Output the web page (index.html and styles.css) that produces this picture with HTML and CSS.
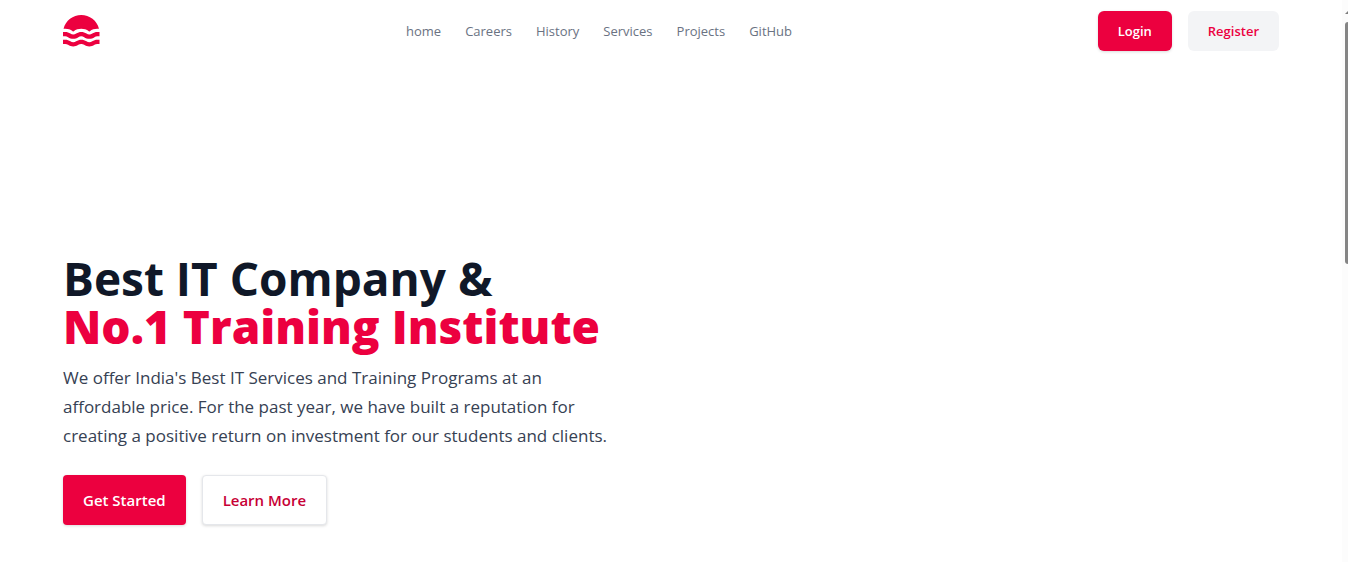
FILE: index.html
```html
<!DOCTYPE html>
<html lang="en">
<head>
<meta charset="utf-8">
<meta name="viewport" content="width=device-width, initial-scale=1">
<title>Best IT Company</title>
<link rel="stylesheet" href="styles.css">
</head>
<body>
<div class="page">
  <header class="header container">
    <a class="logo" href="#" aria-label="Home">
      <svg viewBox="0 0 28 24" fill="currentColor" aria-hidden="true">
        <path d="M0.41 10.3847C1.14777 7.4194 2.85643 4.7861 5.2639 2.90424C7.6714 1.02234 10.6393 0 13.695 0C16.7507 0 19.7186 1.02234 22.1261 2.90424C24.5336 4.7861 26.2422 7.4194 26.98 10.3847H25.78C23.7557 10.3549 21.7729 10.9599 20.11 12.1147C20.014 12.1842 19.9138 12.2477 19.81 12.3047H19.67C19.5662 12.2477 19.466 12.1842 19.37 12.1147C17.6924 10.9866 15.7166 10.3841 13.695 10.3841C11.6734 10.3841 9.6976 10.9866 8.02 12.1147C7.924 12.1842 7.8238 12.2477 7.72 12.3047H7.58C7.4762 12.2477 7.376 12.1842 7.28 12.1147C5.6171 10.9599 3.6343 10.3549 1.61 10.3847H0.41Z"/>
        <path id="wave" d="M23.62 16.6547C24.236 16.175 24.9995 15.924 25.78 15.9447H27.39V12.7347H25.78C24.4052 12.7181 23.0619 13.146 21.95 13.9547C21.3243 14.416 20.5674 14.6649 19.79 14.6649C19.0126 14.6649 18.2557 14.416 17.63 13.9547C16.4899 13.1611 15.1341 12.7356 13.745 12.7356C12.3559 12.7356 11.0001 13.1611 9.86 13.9547C9.2343 14.416 8.4774 14.6649 7.7 14.6649C6.9226 14.6649 6.1657 14.416 5.54 13.9547C4.4144 13.1356 3.0518 12.7072 1.66 12.7347H0V15.9447H1.61C2.39051 15.924 3.154 16.175 3.77 16.6547C4.908 17.4489 6.2623 17.8747 7.65 17.8747C9.0377 17.8747 10.392 17.4489 11.53 16.6547C12.1468 16.1765 12.9097 15.9257 13.69 15.9447C14.4708 15.9223 15.2348 16.1735 15.85 16.6547C16.9901 17.4484 18.3459 17.8738 19.735 17.8738C21.1241 17.8738 22.4799 17.4484 23.62 16.6547Z"/>
        <use href="#wave" y="5.74"/>
      </svg>
    </a>
    <nav class="nav" aria-label="Main">
      <a href="#">home</a>
      <a href="#">Careers</a>
      <a href="#">History</a>
      <a href="#">Services</a>
      <a href="#">Projects</a>
      <a href="#">GitHub</a>
    </nav>
    <div class="account">
      <button class="btn btn-login" type="button">Login</button>
      <button class="btn btn-register" type="button">Register</button>
    </div>
  </header>
  <main class="hero container">
    <h1 class="title">Best IT Company &amp; <strong>No.1 Training Institute</strong></h1>
    <p class="lead">We offer India's Best IT Services and Training Programs at an affordable price. For the past year, we have built a reputation for creating a positive return on investment for our students and clients.</p>
    <div class="actions">
      <button class="btn btn-start" type="button">Get Started</button>
      <button class="btn btn-more" type="button">Learn More</button>
    </div>
  </main>
</div>
<div class="scrollbar" aria-hidden="true">
  <svg class="scroll-arrow" viewBox="0 0 3 3"><path d="M0 3L3 0V3Z" fill="#7d7d7d"/></svg>
  <div class="thumb"></div>
</div>
</body>
</html>
```
FILE: styles.css
```css
* {
  box-sizing: border-box;
}

body {
  margin: 0;
  display: flex;
  min-height: 100vh;
  overflow: hidden;
  background: #fff;
  font-family: "Open Sans", "Noto Sans", sans-serif;
}

.page {
  flex: 1;
  min-width: 0;
}

.container {
  width: 100%;
  max-width: 1280px;
  margin: 0 auto;
  padding: 0 32px;
}

.header {
  display: flex;
  align-items: center;
  justify-content: space-between;
  padding-top: 11px;
  padding-bottom: 11px;
}

.logo {
  color: #ec003f;
}

.logo svg {
  display: block;
  height: 32px;
}

.nav {
  display: flex;
  gap: 24px;
  font-size: 13px;
  line-height: 20px;
}

.nav a {
  color: #6a7282;
  text-decoration: none;
}

.account,
.actions {
  display: flex;
  gap: 16px;
}

.btn {
  border: 0;
  font-family: inherit;
  font-weight: 600;
  cursor: pointer;
}

.btn-login,
.btn-register {
  padding: 10px 20px;
  border-radius: 6px;
  font-size: 13px;
  line-height: 20px;
}

.btn-login,
.btn-start {
  background: #ec003f;
  color: #fff;
  box-shadow: 0 1px 3px rgba(0, 0, 0, 0.15);
}

.btn-register {
  background: #f3f4f6;
  color: #ec003f;
}

.hero {
  padding-top: 192px;
}

.title {
  margin: 0;
  color: #101828;
  font-size: 46px;
  font-weight: 700;
  line-height: 48px;
}

.title strong {
  display: block;
  color: #ec003f;
  font-weight: 800;
}

.lead {
  max-width: 552px;
  margin: 13px 0 0;
  color: #364153;
  font-size: 17px;
  line-height: 29px;
}

.actions {
  margin-top: 25px;
}

.btn-start,
.btn-more {
  padding: 13px 20px;
  border-radius: 4px;
  font-size: 15px;
  line-height: 24px;
}

.btn-more {
  padding: 12px 20px;
  border: 1px solid #e5e7eb;
  background: #fff;
  color: #c70036;
  box-shadow: 0 1px 3px rgba(0, 0, 0, 0.15);
}

.scrollbar {
  width: 6px;
  background: #fcfcfc;
  padding: 11px 0 0 3px;
}

.scroll-arrow {
  display: block;
  width: 3px;
  height: 3px;
}

.thumb {
  height: 242px;
  margin-top: 8px;
  border-radius: 4px 0 0 4px;
  background: #858585;
}
```
